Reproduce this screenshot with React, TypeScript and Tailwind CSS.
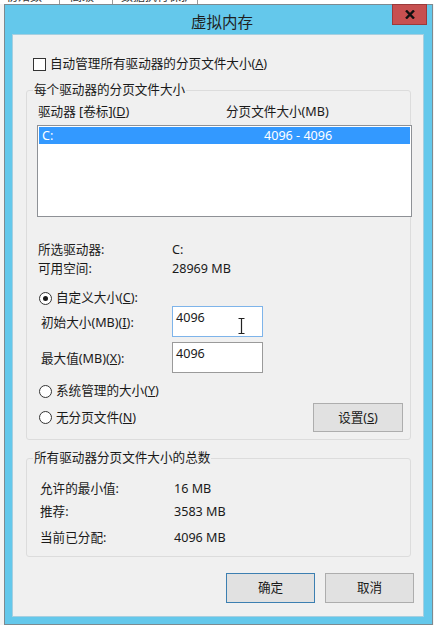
import React from "react";

const Radio = ({ checked }: { checked?: boolean }) => (
  <span className="w-[13px] h-[13px] rounded-full border border-[#333333] bg-white flex items-center justify-center shrink-0">
    {checked && <span className="w-[5px] h-[5px] rounded-full bg-[#1a1a1a]" />}
  </span>
);

const Btn = ({ children, primary }: { children: React.ReactNode; primary?: boolean }) => (
  <div
    className={
      "w-[89px] h-[30px] flex items-center justify-center bg-[#e1e1e1] border text-[#1a1a1a] " +
      (primary ? "border-[#3c7fb1]" : "border-[#adadad]")
    }
  >
    {children}
  </div>
);

export default function App() {
  return (
    <div className="w-[434px] h-[625px] overflow-hidden bg-[#f4f4f4] font-['Noto_Sans','Noto_Sans_CJK_SC',sans-serif] text-[12.6px] leading-[16px] text-[#1a1a1a]">
      {/* background window strip */}
      <div className="h-[4px] overflow-hidden bg-white flex text-[12px] text-[#333]">
        <div className="-mt-[11px] flex">
          <span className="pl-[6px] pr-[6px] w-[60px] border-r border-[#999]">初始数据</span>
          <span className="pl-[10px] w-[53px] border-r border-[#999]">高级</span>
          <span className="pl-[8px] w-[85px] border-r border-[#999]">数据执行保护</span>
        </div>
      </div>
      {/* window */}
      <div className="ml-[4px] w-[429px] h-[621px] border border-[#7d8a90] bg-[#64c8eb] flex flex-col">
        {/* title bar */}
        <div className="relative h-[29px] flex items-center justify-center pt-[4px]">
          <span className="text-[15.5px] leading-[20px] text-[#1f1f1f] ml-[7px]">虚拟内存</span>
          <div className="absolute top-[-1px] right-[5px] w-[35px] h-[21px] bg-[#c75050] border border-[#9c3a3a] flex items-center justify-center">
            <svg width="10" height="9" viewBox="0 0 10 9">
              <path d="M1 0.5 L9 8.5 M9 0.5 L1 8.5" stroke="#111" strokeWidth="2.4" />
            </svg>
          </div>
        </div>
        {/* content */}
        <div className="ml-[7px] w-[412px] h-[583px] bg-[#f0f0f0] border border-[#a6cfe0] flex flex-col px-[13px]">
          <div className="mt-[21px] h-[16px] flex items-center ml-[7px]">
            <span className="w-[13px] h-[13px] border border-[#333333] bg-white shrink-0" />
            <span className="ml-[4px]">
              自动管理所有驱动器的分页文件大小(<u>A</u>)
            </span>
          </div>

          {/* group 1 */}
          <div className="relative mt-[18px] w-[385px] h-[350px] border border-[#dcdcdc] rounded-[3px] flex flex-col pl-[10px]">
            <span className="absolute top-[-9px] left-[6px] bg-[#f0f0f0] px-[1px]">每个驱动器的分页文件大小</span>
            <div className="mt-[13px] h-[16px] flex">
              <span className="w-[189px] pl-[1px]">
                驱动器 [卷标](<u>D</u>)
              </span>
              <span>分页文件大小(MB)</span>
            </div>
            <div className="mt-[5px] w-[375px] h-[92px] bg-white border border-[#8e9196] p-px">
              <div className="h-[17px] bg-[#3399ff] text-white flex items-center">
                <span className="w-[225px] pl-[3px]">C:</span>
                <span>4096 - 4096</span>
              </div>
            </div>
            <div className="mt-[25px] h-[16px] flex pl-[1px]">
              <span className="w-[134px]">所选驱动器:</span>
              <span>C:</span>
            </div>
            <div className="mt-[3px] h-[16px] flex pl-[1px]">
              <span className="w-[134px]">可用空间:</span>
              <span>28969 MB</span>
            </div>
            <div className="mt-[13px] h-[16px] flex items-center pl-[2px]">
              <Radio checked />
              <span className="ml-[4px]">
                自定义大小(<u>C</u>):
              </span>
            </div>
            <div className="h-[31px] flex items-center pl-[4px]">
              <span className="w-[131px] pt-[2px]">
                初始大小(MB)(<u>I</u>):
              </span>
              <div className="relative w-[91px] h-[31px] bg-white border border-[#7eb4ea] pl-[3px] pt-[3px]">
                4096
                <svg className="absolute left-[65px] top-[11px]" width="7" height="16" viewBox="0 0 7 16">
                  <path d="M0.5 0.5 H6.5 M3.5 0.5 V15.5 M0.5 15.5 H6.5" stroke="#222" strokeWidth="1.2" fill="none" />
                </svg>
              </div>
            </div>
            <div className="mt-[5px] h-[31px] flex items-center pl-[4px]">
              <span className="w-[131px] pt-[2px]">
                最大值(MB)(<u>X</u>):
              </span>
              <div className="w-[91px] h-[31px] bg-white border border-[#9a9a9a] pl-[3px] pt-[3px]">4096</div>
            </div>
            <div className="mt-[10px] h-[16px] flex items-center pl-[2px]">
              <Radio />
              <span className="ml-[4px]">
                系统管理的大小(<u>Y</u>)
              </span>
            </div>
            <div className="mt-[4px] h-[29px] flex items-center justify-between pl-[2px] pr-[7px]">
              <div className="flex items-center">
                <Radio />
                <span className="ml-[4px]">
                  无分页文件(<u>N</u>)
                </span>
              </div>
              <div className="w-[90px] h-[29px] flex items-center justify-center bg-[#e1e1e1] border border-[#adadad]">
                设置(<u>S</u>)
              </div>
            </div>
          </div>

          {/* group 2 */}
          <div className="relative mt-[18px] w-[385px] h-[99px] border border-[#dcdcdc] rounded-[3px] flex flex-col pl-[13px]">
            <span className="absolute top-[-9px] left-[6px] bg-[#f0f0f0] px-[1px]">所有驱动器分页文件大小的总数</span>
            <div className="mt-[22px] h-[16px] flex">
              <span className="w-[134px]">允许的最小值:</span>
              <span>16 MB</span>
            </div>
            <div className="mt-[7px] h-[16px] flex">
              <span className="w-[134px]">推荐:</span>
              <span>3583 MB</span>
            </div>
            <div className="mt-[10px] h-[16px] flex">
              <span className="w-[134px]">当前已分配:</span>
              <span>4096 MB</span>
            </div>
          </div>

          <div className="mt-[16px] flex justify-end gap-[10px] mr-[-4px]">
            <Btn primary>确定</Btn>
            <Btn>取消</Btn>
          </div>
        </div>
      </div>
    </div>
  );
}
